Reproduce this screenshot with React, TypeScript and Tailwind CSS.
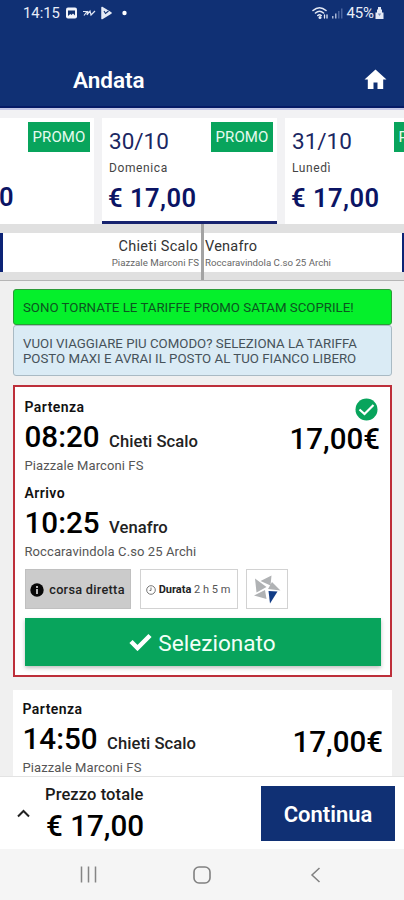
import React from "react";

function Promo({ className = "" }: { className?: string }) {
  return (
    <div className={`flex h-[30px] w-[62px] shrink-0 items-center justify-center bg-[#08a45c] pt-px text-[15px] tracking-[0.1px] text-[#e6fbef] ${className}`}>
      PROMO
    </div>
  );
}

function DateCard({ date, day, active = false }: { date: string; day: string; active?: boolean }) {
  return (
    <div className={`h-[106px] w-[175px] shrink-0 bg-white ${active ? "border-b-[3px] border-[#17236f]" : ""}`}>
      <div className="flex justify-between pl-[7px] pr-[4px] pt-[4px]">
        <div className="whitespace-nowrap pt-[5px] text-[22.500px] leading-[29px] text-[#1b2762]">{date}</div>
        <Promo />
      </div>
      <div className="pl-[7px] pt-[4px] text-[12px] leading-[16px] tracking-[0.6px] text-[#444]">{day}</div>
      <div className="whitespace-nowrap pl-[6px] pt-[5px] text-[25.500px] font-semibold leading-[34px] tracking-[0.5px] text-[#0b1464]">€ 17,00</div>
    </div>
  );
}

function Stop({ label, time, place, address }: { label: string; time: string; place: string; address: string }) {
  return (
    <div className="h-[86px] whitespace-nowrap">
      <div className="text-[14px] font-semibold leading-[18px] tracking-[0.45px] text-[#111]">{label}</div>
      <div className="flex items-baseline gap-[9.500px] pt-px leading-[41px] text-black">
        <span className="text-[29.600px] font-medium">{time}</span>
        <span className="text-[16.600px] font-medium tracking-[0.05px] text-[#222]">{place}</span>
      </div>
      <div className="-mt-[4px] text-[13px] leading-[16px] tracking-[0.1px] text-[#555]">{address}</div>
    </div>
  );
}

function StatusBar() {
  return (
    <div className="flex h-[26px] items-center pl-[23px] pr-[20px] text-[14.5px] text-[#e8edf8]">
      <span className="w-[38px] text-[14.800px]">14:15</span>
      <svg className="ml-[4px]" width="68" height="16" viewBox="0 0 68 16">
        <rect x="1" y="2.5" width="11" height="11" rx="2" fill="#f2f4fb" />
        <path d="M3 5.500h7v5l-2-2-1.500 1.500-1.200-1L3 11z" fill="#10306f" />
        <path d="M18 6.500h4l-3 4M23 6l-1 4 3-4 1 4 4-4" fill="none" stroke="#dfe5f3" strokeWidth="1.200" />
        <path d="M37 2.500L46 8l-9 5.500z" fill="#e5eaf5" stroke="#e5eaf5" strokeWidth="1.500" strokeLinejoin="round" />
        <path d="M39 6l1.500 2.500 3-2.500" fill="none" stroke="#10306f" strokeWidth="1.100" />
        <circle cx="59.500" cy="8" r="2.200" fill="#fff" />
      </svg>
      <svg className="ml-auto" width="32" height="16" viewBox="0 0 32 16">
        <g fill="none" stroke="#e4e9f5" strokeWidth="1.600" strokeLinecap="round">
          <path d="M1 5.500Q7.500 0 14 5.500M3.500 8q4-3.500 8 0M5.800 10.500q1.700-1.500 3.400 0" />
          <path d="M12.500 10v3M15 10v3" strokeWidth="1.300" />
        </g>
        <circle cx="8" cy="12.500" r="1.500" fill="#e4e9f5" />
        <path d="M20 11h1.500v2.500H20zM23 8.500h1.500v5H23z" fill="#a7b5d4" />
        <path d="M26 6h1.500v7.500H26zM29 3.500h1.500v10H29z" fill="#4a659f" />
      </svg>
      <span className="ml-[2px] text-[15px] tracking-[-0.1px]">45%</span>
      <svg className="ml-[1px]" width="9" height="14" viewBox="0 0 9 14">
        <path d="M3 1h3v2.500h1v3h1.500V13h-8V6.500H2v-3h1z" fill="#e4e9f5" />
        <path d="M2.800 7.500h3.400l-1.700 2.500z" fill="#7c8fbb" />
      </svg>
    </div>
  );
}

export default function App() {
  return (
    <div className="flex h-[900px] w-[404px] flex-col overflow-hidden bg-[#f0f0f0] font-['Roboto',sans-serif]">
      <header className="h-[108px] shrink-0 border-b-2 border-[#061b66] bg-[#103074]">
        <StatusBar />
        <div className="flex h-[80px] items-center justify-between pl-[73px] pr-[17px] pt-[28px]">
          <h1 className="text-[22.500px] font-semibold leading-[28px] text-white">Andata</h1>
          <svg className="mb-px" width="23" height="21" viewBox="0 0 23 21">
            <path d="M11.500 0.500L0.500 10.500h3.300V20h5.700v-6.500h4V20h5.700v-9.500h3.300z" fill="#fff" />
          </svg>
        </div>
      </header>

      <section className="flex h-[116px] shrink-0 gap-[8px] overflow-hidden border-t-2 border-[#c4c7e6] bg-[#f2f2f4] pt-[8px]">
        <div className="flex h-[106px] w-[94px] shrink-0 justify-between overflow-hidden bg-white">
          <div className="pt-[62px] text-[25.500px] font-semibold leading-[34px] text-[#0b1464]">
            <span className="-ml-[1px]">0</span>
          </div>
          <Promo className="mr-[4px] mt-[4px]" />
        </div>
        <DateCard date="30/10" day="Domenica" active />
        <DateCard date="31/10" day="Lunedì" />
      </section>

      <section className="flex h-[57px] shrink-0 items-center border-b border-[#b5b5b5] bg-[#e0e0e0]">
        <div className="h-[39px] w-[3px] bg-[#0c2376]" />
        <div className="h-[39px] w-[198px] whitespace-nowrap bg-white pr-[2px] pt-[4px] text-right">
          <div className="pr-[1px] text-[14.500px] leading-[19px] tracking-[0.25px] text-[#333]">Chieti Scalo</div>
          <div className="text-[9.700px] leading-[13px] text-[#666]">Piazzale Marconi FS</div>
        </div>
        <div className="h-[56px] w-[3px] bg-[#a3a3a3]" />
        <div className="h-[39px] flex-1 whitespace-nowrap bg-white pl-[1px] pt-[4px]">
          <div className="text-[14.500px] leading-[19px] tracking-[0.25px] text-[#333]">Venafro</div>
          <div className="text-[9.700px] leading-[13px] text-[#666]">Roccaravindola C.so 25 Archi</div>
        </div>
        <div className="h-[39px] w-[2px] bg-[#0c2376]" />
      </section>

      <main className="h-[495px] shrink-0 overflow-hidden pl-[13px] pr-[12px] pt-[8px]">
        <div className="flex h-[36px] items-center whitespace-nowrap rounded-[3px] border border-[#2b9b37] bg-[#05f02b] pl-[9px] pt-px text-[13.250px] text-[#0c5520]">
          SONO TORNATE LE TARIFFE PROMO SATAM SCOPRILE!
        </div>
        <div className="h-[51px] whitespace-nowrap rounded-[3px] border border-[#a9bac4] bg-[#daebf5] pl-[9px] pt-[9.500px] text-[13.250px] leading-[15.500px] text-[#46525a]">
          <div>VUOI VIAGGIARE PIU COMODO? SELEZIONA LA TARIFFA</div>
          <div>POSTO MAXI E AVRAI IL POSTO AL TUO FIANCO LIBERO</div>
        </div>

        <article className="mt-[9px] h-[292px] border-2 border-[#bd2f3a] bg-white pl-[9.500px] pr-[10px] pt-[11px]">
          <div className="flex h-[172px] justify-between">
            <div>
              <Stop label="Partenza" time="08:20" place="Chieti Scalo" address="Piazzale Marconi FS" />
              <Stop label="Arrivo" time="10:25" place="Venafro" address="Roccaravindola C.so 25 Archi" />
            </div>
            <div className="flex flex-col items-end">
              <svg className="mr-[2px]" width="23" height="23" viewBox="0 0 23 23">
                <circle cx="11.500" cy="11.500" r="11" fill="#08a45c" />
                <path d="M4.500 11.500l5 4.500 9-9" fill="none" stroke="#fff" strokeWidth="2.200" />
              </svg>
              <div className="text-[29.500px] font-medium leading-[37px] text-black">17,00€</div>
            </div>
          </div>
          <div className="-mt-px flex h-[40px] whitespace-nowrap">
            <div className="flex w-[106px] items-center justify-center gap-[5px] border border-[#c0c0c0] bg-[#cbcbcb] pt-px text-[12.700px] font-medium tracking-[0.3px] text-[#222]">
              <svg width="14" height="14" viewBox="0 0 14 14">
                <circle cx="7" cy="7" r="6.700" fill="#080808" />
                <path d="M6 3h2v2H6zM6 6h2v5H6z" fill="#b5b5b5" />
              </svg>
              <span>corsa diretta</span>
            </div>
            <div className="ml-[9px] flex w-[98px] items-center justify-center gap-[3px] border border-[#d2d2d2] pt-px text-[11px] text-[#555]">
              <svg width="10" height="10" viewBox="0 0 10 10" fill="none" stroke="#666" strokeWidth="0.900">
                <circle cx="5" cy="5" r="4.300" />
                <path d="M5 2.500V5.500H3.500" />
              </svg>
              <span className="pr-px pt-px"><b className="text-[#222]">Durata</b> 2 h 5 m</span>
            </div>
            <div className="ml-[8px] flex w-[42px] items-center justify-center border border-[#d2d2d2]">
              <svg width="28" height="30" viewBox="0 0 28 30">
                <path d="M18.500 1.500L17.500 11.500 7.500 7zM2 4.500l11.500 8.500L3.500 18.500zM19 8l8.500 8.500-12.500-1.500zM12 16l1.500 9L1 21.500z" fill="#b0b2b4" />
                <path d="M15.500 17l9 .5-7.500 12z" fill="#123c86" />
              </svg>
            </div>
          </div>
          <div className="mt-[9px] flex h-[48px] w-[356px] items-center justify-center gap-[6px] bg-[#08a45c] pt-[4px] text-[22.600px] text-[#f1fff7] shadow-[0_2px_4px_rgba(0,0,0,0.25)]">
            <svg className="mb-[4px]" width="23" height="18" viewBox="0 0 23 18">
              <path d="M2 8.500l6.500 6.500L21 2.500" fill="none" stroke="#fff" strokeWidth="4.500" />
            </svg>
            <span>Selezionato</span>
          </div>
        </article>

        <article className="mt-[13px] flex h-[140px] justify-between bg-white pl-[9.500px] pr-[9px] pt-[10px]">
          <Stop label="Partenza" time="14:50" place="Chieti Scalo" address="Piazzale Marconi FS" />
          <div className="pt-[23px] text-[29.500px] font-medium leading-[39px] text-black">17,00€</div>
        </article>
      </main>

      <footer className="flex h-[73px] shrink-0 items-center border-t border-[#e3e3e3] bg-white pl-[17px] pr-[9px]">
        <svg width="13" height="9" viewBox="0 0 13 9">
          <path d="M1 7.500L6.500 2 12 7.500" fill="none" stroke="#222" strokeWidth="2" />
        </svg>
        <div className="flex-1 whitespace-nowrap pl-[15px] pt-[3px]">
          <div className="text-[16.500px] font-medium leading-[22px] tracking-[0.1px] text-[#1b1b1b]">Prezzo totale</div>
          <div className="pl-px pt-px text-[29.600px] font-medium leading-[39px] text-black">€ 17,00</div>
        </div>
        <button className="h-[55px] w-[134px] bg-[#103074] pt-[2px] text-[22px] font-semibold text-white">Continua</button>
      </footer>

      <nav className="flex h-[51px] shrink-0 items-center bg-[#f5f5f5] pl-[80px]">
        <svg width="17" height="17" viewBox="0 0 17 17" stroke="#858585" strokeWidth="1.500">
          <path d="M1.500 0.500v16M8.500 0.500v16M15.500 0.500v16" />
        </svg>
        <svg className="ml-[96px]" width="18" height="18" viewBox="0 0 18 18">
          <rect x="1" y="1" width="16" height="16" rx="5" fill="none" stroke="#808080" strokeWidth="1.600" />
        </svg>
        <svg className="ml-[99px]" width="11" height="16" viewBox="0 0 11 16">
          <path d="M9.500 1L2 8l7.500 7" fill="none" stroke="#808080" strokeWidth="1.500" />
        </svg>
      </nav>
    </div>
  );
}
